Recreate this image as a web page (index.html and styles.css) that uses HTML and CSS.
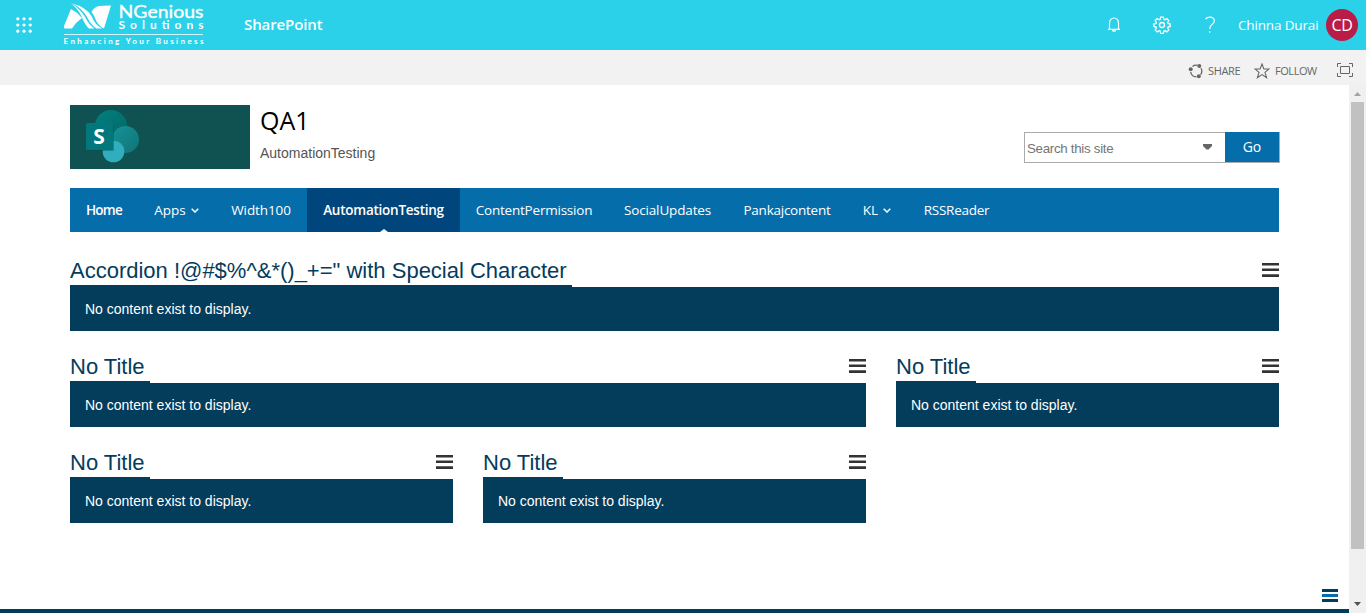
FILE: index.html
```html
<!DOCTYPE html>
<html lang="en">
<head>
<meta charset="utf-8">
<title>QA1 - AutomationTesting</title>
<link rel="stylesheet" href="styles.css">
</head>
<body>
<header class="suite">
  <svg class="waffle" width="16" height="16" viewBox="0 0 16 16" fill="#fff"><circle cx="1.8" cy="1.8" r="1.6"/><circle cx="8" cy="1.8" r="1.6"/><circle cx="14.2" cy="1.8" r="1.6"/><circle cx="1.8" cy="8" r="1.6"/><circle cx="8" cy="8" r="1.6"/><circle cx="14.2" cy="8" r="1.6"/><circle cx="1.8" cy="14.2" r="1.6"/><circle cx="8" cy="14.2" r="1.6"/><circle cx="14.2" cy="14.2" r="1.6"/></svg>
  <svg class="brand" width="160" height="50" viewBox="0 0 160 50" fill="#fff">
    <path d="M16 9Q22 12 27 18Q21 22 17 28.500H10Q8.500 28.500 9 26Z"/>
    <path d="M15 3Q25 8 30 17Q34 25 39.500 28.500H34Q30 25 27 17.500Q23 8 15 3Z"/>
    <path d="M17 3.500Q31 7 36.500 16Q40 25 47 28.500H41.500Q36 25 32 17Q27 8 17 3.500Z"/>
    <path d="M42 6.500Q46 5.500 56 5.500L49.500 27Q49 29 47 27.500Q42 24 40 18Q38.500 14.500 36.500 12Q38.500 8 42 6.500Z"/>
    <text class="brand-name" x="63.500" y="18" textLength="85" lengthAdjust="spacingAndGlyphs">NGenious</text>
    <text class="brand-sub" x="63.500" y="29" textLength="85">Solutions</text>
    <path d="M9 34h139v1H9z" opacity=".8"/>
    <text class="brand-tag" x="8.500" y="44" textLength="140">Enhancing Your Business</text>
  </svg>
  <span class="app">SharePoint</span>
  <div class="tools">
    <svg class="bell" width="14" height="16" viewBox="0 0 14 16" fill="none" stroke="#fff" stroke-width="1.200"><path d="M1 12.400h12M2.500 12V6a4.500 5 0 0 1 9 0v6M5.300 13a1.800 1.800 0 0 0 3.400 0"/></svg>
    <svg class="gear" width="18" height="18" viewBox="0 0 18 18" fill="none" stroke="#fff" stroke-width="1.300"><path d="M7.600 1.200h2.800l.5 2.200 1 .4 2-1.200 1.900 1.900-1.200 2 .4 1 2.200.5v2.500l-2.200.5-.4 1 1.200 2-1.900 1.900-2-1.200-1 .4-.5 2.200H7.600l-.5-2.200-1-.4-2 1.200-1.900-1.900 1.200-2-.4-1L.8 10.500V8L3 7.500l.4-1-1.200-2 1.900-1.900 2 1.200 1-.4z"/><circle cx="9" cy="9" r="2.500"/></svg>
    <svg class="help" width="12" height="18" viewBox="0 0 12 18" fill="none" stroke="#fff" stroke-width="1.200"><path d="M1.500 3Q3 1.200 6 1.200q4.300 0 4.300 3.600Q10.300 7 8 8.500 5.700 10 5.700 13M5.700 15v1.700"/></svg>
    <span class="user">Chinna Durai</span>
    <span class="avatar">CD</span>
  </div>
</header>
<div class="ribbon">
  <svg class="share-icon" width="16" height="16" viewBox="0 0 16 16"><path d="M4.500 3.500A5.800 5.800 0 0 1 9.500 2.400M13 5.200A5.800 5.800 0 0 1 12.500 11.700M8.500 13.800A5.800 5.800 0 0 1 2.700 9" fill="none" stroke="#666" stroke-width="1.300"/><circle cx="2.700" cy="6.300" r="2" fill="#666"/><circle cx="11.300" cy="3" r="2" fill="#666"/><circle cx="10.800" cy="13.200" r="2" fill="#666"/></svg>
  <span class="share">SHARE</span>
  <svg class="star" width="16" height="16" viewBox="0 0 16 16" fill="none" stroke="#666" stroke-width="1.100"><path d="M8 1l1.900 5H15l-4 3.400 1.600 5.300L8 11.600l-4.600 3.100L5 9.400 1 6h5.100z"/></svg>
  <span class="follow">FOLLOW</span>
  <svg class="focus" width="16" height="14" viewBox="0 0 16 14" fill="none" stroke="#666"><path d="M4 .5H.5V4M12 .5h3.500V4M.5 10v3.500H4M15.500 10v3.500H12M3.500 3.500h9v7h-9z"/></svg>
</div>
<div class="workspace">
  <main class="page">
    <div class="title-row">
      <svg class="site-logo" width="180" height="64" viewBox="0 0 180 64">
        <defs><linearGradient id="top" x2="1" y2="1"><stop stop-color="#02817f"/><stop offset="1" stop-color="#036467"/></linearGradient><linearGradient id="side" x2="1" y2="1"><stop stop-color="#159397"/><stop offset="1" stop-color="#117377"/></linearGradient></defs>
        <path fill="#105152" d="M0 0h180v64H0z"/>
        <circle cx="41" cy="21" r="16" fill="url(#top)"/><circle cx="55.500" cy="34.500" r="13.500" fill="url(#side)"/><circle cx="43.500" cy="46.500" r="10.800" fill="#30aebd"/>
        <rect x="17" y="19" width="27" height="27" rx="1.500" fill="#064b4d" opacity=".4"/><rect x="16" y="18" width="27" height="27" rx="1.500" fill="#03787c"/>
        <text class="logo-letter" x="29" y="38.700" text-anchor="middle">S</text>
      </svg>
      <div class="titles"><h1>QA1</h1><p>AutomationTesting</p></div>
      <div class="search"><span class="query">Search this site</span><svg class="caret" width="10" height="6" viewBox="0 0 10 6"><path fill="#666" d="M0 0h9v2L5.500 5.500h-2L0 2z"/></svg><span class="go">Go</span></div>
    </div>
    <nav class="nav">
      <a class="home">Home</a>
      <a class="apps">Apps<svg class="chev" width="8" height="5" viewBox="0 0 8 5"><path d="M.7.7L4 4 7.300.7"/></svg></a>
      <a class="width100">Width100</a>
      <a class="current">AutomationTesting</a>
      <a class="permission">ContentPermission</a>
      <a class="updates">SocialUpdates</a>
      <a class="pankaj">Pankajcontent</a>
      <a class="kl">KL<svg class="chev" width="8" height="5" viewBox="0 0 8 5"><path d="M.7.7L4 4 7.300.7"/></svg></a>
      <a class="rss">RSSReader</a>
    </nav>
    <div class="parts">
      <section class="part full"><div class="head"><h2>Accordion !@#$%^&amp;*()_+=" with Special Character</h2><i class="menu"></i></div><div class="body">No content exist to display.</div></section>
      <section class="part wide"><div class="head"><h2>No Title</h2><i class="menu"></i></div><div class="body">No content exist to display.</div></section>
      <section class="part"><div class="head"><h2>No Title</h2><i class="menu"></i></div><div class="body">No content exist to display.</div></section>
      <section class="part"><div class="head"><h2>No Title</h2><i class="menu"></i></div><div class="body">No content exist to display.</div></section>
      <section class="part"><div class="head"><h2>No Title</h2><i class="menu"></i></div><div class="body">No content exist to display.</div></section>
    </div>
    <div class="footer"><svg class="quick" width="16" height="13" viewBox="0 0 16 13"><path fill="#043c5c" d="M0 0h16v3H0zM0 10h16v3H0z"/><path fill="#066dab" d="M0 5h16v3H0z"/></svg></div>
  </main>
  <div class="scrollbar">
    <svg class="up" width="7" height="4" viewBox="0 0 7 4"><path fill="#a3a3a3" d="M0 4l3.500-4L7 4z"/></svg>
    <div class="thumb"></div>
    <svg class="down" width="7" height="4" viewBox="0 0 7 4"><path fill="#505050" d="M0 0h7L3.500 4z"/></svg>
  </div>
</div>
</body>
</html>
```
FILE: styles.css
```css
* { box-sizing: border-box; }
body { margin: 0; height: 613px; overflow: hidden; display: flex; flex-direction: column; background: #fff; font-family: "Liberation Sans", Arial, sans-serif; }
svg { display: block; flex: none; }
h1, h2, p { margin: 0; font-weight: 400; }

.suite { height: 50px; flex: none; display: flex; align-items: center; background: #2bd1e9; color: #fff; font-family: "Open Sans", sans-serif; padding: 0 8px 0 16px; white-space: nowrap; }
.waffle { margin-top: -1px; }
.brand { margin-left: 23px; }
.brand-name { font: 16.5px Lato, sans-serif; stroke: #fff; stroke-width: 0.3px; }
.brand-sub { font: 700 12px Lato, sans-serif; }
.brand-tag { font: 700 8px Lato, sans-serif; }
.app { margin: -2px 0 0 29px; font-size: 15px; font-weight: 600; letter-spacing: -0.1px; }
.tools { margin-left: auto; display: flex; align-items: center; }
.bell { margin-right: 32px; }
.gear { margin-right: 33px; }
.help { margin-right: 22px; }
.user { width: 80px; font-size: 13.5px; letter-spacing: -0.15px; }
.avatar { width: 32px; height: 32px; margin-left: 8px; border-radius: 50%; background: #b91d47; font-size: 16px; line-height: 32px; text-align: center; letter-spacing: -0.3px; }

.ribbon { height: 35px; flex: none; display: flex; align-items: center; justify-content: flex-end; padding: 7px 13px 0 0; background: #f2f2f2; color: #666; font: 11px "Open Sans", sans-serif; }
.share, .follow { margin-top: -2px; }
.share { width: 33px; margin-right: 13px; margin-left: 4px; letter-spacing: -0.35px; }
.follow { width: 41px; margin-right: 21px; margin-left: 5px; letter-spacing: -0.45px; }
.focus { margin-top: -3px; }

.workspace { flex: 1; display: flex; min-height: 0; }
.page { width: 1349px; padding: 20px 0 0 70px; display: flex; flex-direction: column; }
.title-row { width: 1210px; height: 64px; display: flex; }
.logo-letter { font: 700 21px "Open Sans", sans-serif; fill: #fff; }
.titles { margin-left: 10px; }
.titles h1 { font: 25px/33px "Open Sans", sans-serif; letter-spacing: 0; margin-top: -1px; color: #000; }
.titles p { font-size: 14px; line-height: 16px; margin-top: 8px; color: #555; }
.search { width: 256px; height: 31px; margin: 27px 0 0 auto; border: 1px solid #ababab; display: flex; align-items: stretch; }
.query { flex: 1; padding-left: 2px; font-size: 13.33px; letter-spacing: -0.3px; line-height: 31px; color: #757575; }
.caret { margin: 11px 12px 0 0; }
.go { width: 54px; margin-top: -1px; background: #066dab; color: #fff; font: 14px/30px "Open Sans", sans-serif; text-align: center; }

.nav { width: 1209px; height: 44px; flex: none; margin-top: 19px; display: flex; background: #066dab; color: #fff; font: 13.5px/44px "Open Sans", sans-serif; }
.nav a { display: flex; align-items: center; justify-content: center; white-space: nowrap; flex: none; }
.home { width: 68px; font-weight: 600; letter-spacing: -0.7px; }
.apps { width: 77px; }
.width100 { width: 92px; letter-spacing: -0.1px; }
.current { width: 153px; background: #00467c; font-weight: 600; letter-spacing: -0.25px; position: relative; }
.current::after { content: ""; position: absolute; left: 73px; bottom: 0; border: solid transparent; border-width: 0 4px 3px; border-bottom-color: #fff; }
.permission { width: 148px; letter-spacing: -0.22px; }
.updates { width: 119px; letter-spacing: -0.15px; }
.pankaj { width: 120px; letter-spacing: -0.25px; }
.kl { width: 60px; }
.rss { width: 99px; letter-spacing: -0.25px; }
.chev { margin-left: 5px; fill: none; stroke: #fff; stroke-width: 1.5px; }

.parts { width: 1209px; margin-top: 24px; display: grid; grid-template-columns: repeat(3, 383px); column-gap: 30px; row-gap: 21px; }
.full { grid-column: span 3; }
.wide { grid-column: span 2; }
.head { height: 31px; display: flex; align-items: flex-start; justify-content: space-between; }
.head h2 { height: 31px; padding-right: 5px; border-bottom: 2px solid #043c5c; color: #043c5c; font-size: 22px; line-height: 29px; white-space: nowrap; }
.menu { width: 17px; height: 14px; margin-top: 7px; background: linear-gradient(#333 0 2px, #999 2px 3px, transparent 3px 5px, #999 5px 6px, #333 6px 8px, transparent 8px 11px, #666 11px 12px, #333 12px); }
.body { height: 44px; padding-left: 15px; background: #043c5c; color: #fff; font-size: 14px; line-height: 44px; }

.footer { height: 24px; margin: auto 0 0 -70px; border-bottom: 4px solid #043c5c; display: flex; justify-content: flex-end; padding-right: 11px; }
.scrollbar { width: 17px; background: #f0f0f0; display: flex; flex-direction: column; align-items: center; padding: 7px 0; }
.thumb { width: 13px; height: 447px; margin-top: 6px; background: #c1c1c1; }
.down { margin-top: auto; }
```
